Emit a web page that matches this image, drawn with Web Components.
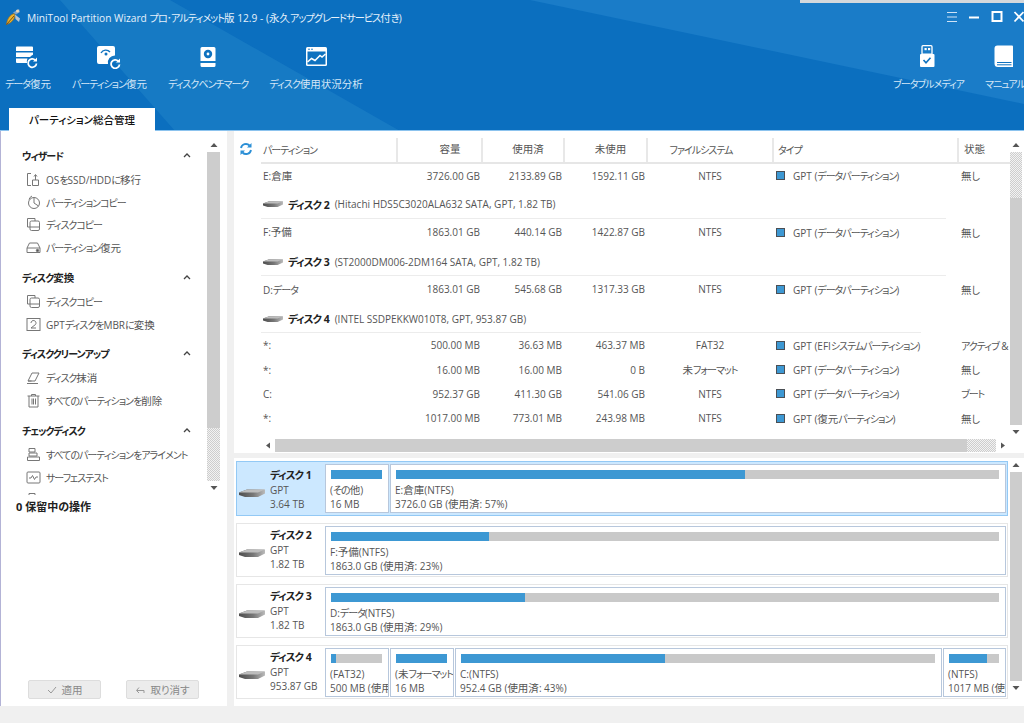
<!DOCTYPE html>
<html lang="ja">
<head>
<meta charset="utf-8">
<title>MiniTool Partition Wizard</title>
<style>
  html, body { margin: 0; height: 723px; overflow: hidden; background: #fff; }
  body {
    display: flex; flex-direction: column;
    font: 10px "Open Sans", "Noto Sans CJK JP", sans-serif;
    font-feature-settings: "palt";
    color: #555;
  }
  .main { display: flex; height: 575px; flex: none; }
  .gutter { width: 7px; flex: none; background: #f0f0f0; }
  .content { width: 790px; flex: none; display: flex; flex-direction: column; }
  .band { flex: 1; background: #f0f0f0; }
  .k { letter-spacing: -1px; }
  .h { font-size: 10.5px; line-height: 1; }
</style>
</head>
<body>
<app-header>
  <title-bar>MiniTool Partition Wizard プロ･アルティメット版 12.9 - (永久アップグレードサービス付き)</title-bar>
  <tool-bar>
    <tool-item slot="left" icon="data" label="データ復元"></tool-item>
    <tool-item slot="left" icon="part" label="パーティション復元"></tool-item>
    <tool-item slot="left" icon="bench" label="ディスクベンチマーク"></tool-item>
    <tool-item slot="left" icon="usage" label="ディスク使用状況分析"></tool-item>
    <tool-item slot="right" icon="usb" label="ブータブルメディア"></tool-item>
    <tool-item slot="right" icon="book" label="マニュアル"></tool-item>
  </tool-bar>
  <tab-strip>パーティション総合管理</tab-strip>
</app-header>

<div class="main">
  <side-panel>
    <side-group title="ウィザード">
      <side-item icon="migrate">OSをSSD/HDDに移行</side-item>
      <side-item icon="pie">パーティションコピー</side-item>
      <side-item icon="copy">ディスクコピー</side-item>
      <side-item icon="drive">パーティション復元</side-item>
    </side-group>
    <side-group title="ディスク変換">
      <side-item icon="copy">ディスクコピー</side-item>
      <side-item icon="convert">GPTディスクをMBRに変換</side-item>
    </side-group>
    <side-group title="ディスククリーンアップ">
      <side-item icon="eraser">ディスク抹消</side-item>
      <side-item icon="trash">すべてのパーティションを削除</side-item>
    </side-group>
    <side-group title="チェックディスク">
      <side-item icon="align">すべてのパーティションをアライメント</side-item>
      <side-item icon="surface">サーフェステスト</side-item>
      <side-item icon="align">ファイルシステムチェック</side-item>
    </side-group>
  </side-panel>
  <div class="gutter"></div>
  <div class="content">
    <partition-table>
      <partition-row h="25" name="E:倉庫" cap="3726.00 GB" used="2133.89 GB" free="1592.11 GB" fs="NTFS" type="GPT (データパーティション)" status="無し"></partition-row>
      <disk-row h="30" w="685" name="ディスク 2" info="(Hitachi HDS5C3020ALA632 SATA, GPT, 1.82 TB)"></disk-row>
      <partition-row h="28" name="F:予備" cap="1863.01 GB" used="440.14 GB" free="1422.87 GB" fs="NTFS" type="GPT (データパーティション)" status="無し"></partition-row>
      <disk-row h="29" w="685" name="ディスク 3" info="(ST2000DM006-2DM164 SATA, GPT, 1.82 TB)"></disk-row>
      <partition-row h="28" name="D:データ" cap="1863.01 GB" used="545.68 GB" free="1317.33 GB" fs="NTFS" type="GPT (データパーティション)" status="無し"></partition-row>
      <disk-row h="29" w="660" name="ディスク 4" info="(INTEL SSDPEKKW010T8, GPT, 953.87 GB)"></disk-row>
      <partition-row h="24.4" gap name="*:" cap="500.00 MB" used="36.63 MB" free="463.37 MB" fs="FAT32" type="GPT (EFIシステムパーティション)" status="アクティブ &amp; ブート"></partition-row>
      <partition-row h="24.4" name="*:" cap="16.00 MB" used="16.00 MB" free="0 B" fs="未フォーマット" type="GPT (データパーティション)" status="無し"></partition-row>
      <partition-row h="24.4" name="C:" cap="952.37 GB" used="411.30 GB" free="541.06 GB" fs="NTFS" type="GPT (データパーティション)" status="ブート"></partition-row>
      <partition-row h="24.4" name="*:" cap="1017.00 MB" used="773.01 MB" free="243.98 MB" fs="NTFS" type="GPT (復元パーティション)" status="無し"></partition-row>
    </partition-table>
    <disk-map>
      <disk-card selected name="ディスク 1" scheme="GPT" size="3.64 TB">
        <part-box w="64" used="100" name="(その他)" size="16 MB"></part-box>
        <part-box w="616" used="57.8" name="E:倉庫(NTFS)" size="3726.0 GB (使用済: 57%)"></part-box>
      </disk-card>
      <disk-card name="ディスク 2" scheme="GPT" size="1.82 TB">
        <part-box w="681" used="23.6" name="F:予備(NTFS)" size="1863.0 GB (使用済: 23%)"></part-box>
      </disk-card>
      <disk-card name="ディスク 3" scheme="GPT" size="1.82 TB">
        <part-box w="681" used="29.1" name="D:データ(NTFS)" size="1863.0 GB (使用済: 29%)"></part-box>
      </disk-card>
      <disk-card name="ディスク 4" scheme="GPT" size="953.87 GB">
        <part-box w="64" used="9" name="(FAT32)" size="500 MB (使用済: 7%)"></part-box>
        <part-box w="64" used="100" name="(未フォーマット)" size="16 MB"></part-box>
        <part-box w="487" used="43" name="C:(NTFS)" size="952.4 GB (使用済: 43%)"></part-box>
        <part-box w="63" used="76" name="(NTFS)" size="1017 MB (使用済: 76%)"></part-box>
      </disk-card>
    </disk-map>
  </div>
</div>
<div class="band"></div>

<script>
// the original UI font has narrow kana and slightly larger kanji, wrap runs so both fit
const fit = (text) => text
  .replace(/[\u3040-\u30FF\uFF65]+/g, m => `<span class="k">${m}</span>`)
  .replace(/[\u4E00-\u9FFF]+/g, m => `<span class="h">${m}</span>`);

const REDO = `<path d="M19.5 17.5a4.2 4.2 0 1 1-1.2-3.4" fill="none" stroke="#fff" stroke-width="1.8"/><path d="M20 11.5v4h-4z" fill="#fff"/>`;

const TOOL_ICONS = {
  data: `<path d="M1 1.500h15a1 1 0 0 1 1 1V6H0V2.500a1 1 0 0 1 1-1zM0 7.500h17v2.200a6.500 6.500 0 0 0-3 2.300H0zM0 13.500h11.500a6.500 6.500 0 0 0-.4 4.500H1a1 1 0 0 1-1-1z" fill="#fff"/><g transform="translate(1 1)">${REDO}</g>`,
  part: `<path d="M2 1h14a2 2 0 0 1 2 2v7.500a7 7 0 0 0-7 8.500H2a2 2 0 0 1-2-2V3a2 2 0 0 1 2-2z" fill="#fff"/><path d="M4 8a5.500 5.500 0 0 1 9-1" fill="none" stroke="#0f72bf" stroke-width="1.400"/><circle cx="9" cy="9" r="1.500" fill="#0f72bf"/><g transform="translate(3 2)">${REDO}</g>`,
  bench: `<path d="M2.500 1h12A1.500 1.500 0 0 1 16 2.500V15H1V2.500A1.500 1.500 0 0 1 2.500 1zM1 17h15v2.500a1.500 1.500 0 0 1-1.500 1.500h-12A1.500 1.500 0 0 1 1 19.500z" fill="#fff" transform="translate(3.500 1)"/><circle cx="12" cy="9" r="4.200" fill="#0f72bf"/><circle cx="12" cy="9" r="1.400" fill="#fff"/>`,
  usage: `<rect x="2" y="2" width="21" height="19" rx="1.500" fill="#fff"/><rect x="3.500" y="6.500" width="18" height="13" fill="#0f72bf"/><circle cx="5" cy="4.300" r=".8" fill="#0f72bf"/><circle cx="8" cy="4.300" r=".8" fill="#0f72bf"/><path d="M3.500 17l4-3.500 3.500 2 5-5 2 1.500 3.500-3" fill="none" stroke="#fff" stroke-width="1.500"/>`,
  usb: `<path d="M5.500 0h8a1 1 0 0 1 1 1v7.500h-10V1a1 1 0 0 1 1-1z" fill="none" stroke="#fff" stroke-width="1.300" transform="translate(.5 .7)"/><rect x="7.500" y="3" width="2.200" height="2.200" fill="#fff"/><rect x="11" y="3" width="2.200" height="2.200" fill="#fff"/><rect x="3" y="9" width="14.500" height="13" rx="1" fill="#fff"/><path d="M6.500 15l2.500 2.800 4.500-5" fill="none" stroke="#0f72bf" stroke-width="1.600"/>`,
  book: `<path d="M4.500 0.500H19a1 1 0 0 1 1 1V22H5a3.500 3.500 0 0 1-3.500-3.500V3.500a3 3 0 0 1 3-3z" fill="#fff"/><path d="M4 17.500h14.500M4 19.800h14.500" stroke="#0f72bf" stroke-width="1"/>`
};

const SIDE_ICONS = {
  migrate: `<path d="M5 1.500H1.500v12H5M6.500 13.500h6V8h-6zM9.500 8V3M8 4.500l1.500-2 1.500 2"/>`,
  pie: `<circle cx="8" cy="8" r="5.500"/><path d="M8 8V2.500M8 8l4.500 3M3 4.500A5.500 5.500 0 0 1 6 1"/>`,
  copy: `<path d="M4 10H1.500V1.500H9V4"/><rect x="4" y="4" width="9.500" height="9.500" rx="1.500"/><path d="M4 10h9.500"/>`,
  drive: `<path d="M3.500 3h8l2.500 5v4.500H1V8zM1 8h13"/><circle cx="11.500" cy="10.500" r="1.200" fill="#555"/>`,
  convert: `<rect x="1" y="1.500" width="13" height="12"/><path d="M5 6a2.500 2.500 0 1 1 4.500 1.500L5 11h5"/>`,
  eraser: `<path d="M6 3h7l-4 8H2zM2 11h3.500M1 13.500h11"/>`,
  trash: `<path d="M1.500 3h12M5.500 3V1.500h4V3M3 3v11h9V3M6 5.500v6M7.500 5.500v6M9.500 5.500v6"/>`,
  align: `<path d="M3 1.500h6v3.500H3zM3 6h8v3H3zM1.500 10h12v3.500h-12z"/>`,
  surface: `<rect x="1" y="2" width="13" height="11" rx="1"/><path d="M3 8h2l1.500-2.500 2 4L10 7h2"/>`
};

const diskIcon = (w) => `<svg width="${w}" height="${Math.round(w * .38)}" viewBox="0 0 26 10"><defs><linearGradient id="g" x1="0" x2="1" y1="0" y2="0"><stop offset="0" stop-color="#4d4d4d"/><stop offset=".55" stop-color="#777"/><stop offset="1" stop-color="#bbb"/></linearGradient></defs><path d="M0 4.500 8 1.500h18v4L19 9H6L0 7z" fill="url(#g)"/><path d="M0 4.500 8 1.500h18L19 4.500z" fill="#bdbdbd"/></svg>`;

class Shadowed extends HTMLElement {
  connectedCallback() {
    if (this.shadowRoot) return;
    this.attachShadow({ mode: 'open' });
    this.shadowRoot.innerHTML = `<style>.k{letter-spacing:-1px}.h{font-size:10.5px;line-height:1}${this.constructor.styles}</style>${this.template()}`;
  }
  template() { return '<slot></slot>'; }
}

class AppHeader extends Shadowed {
  static styles = `
    :host { display: block; position: relative; height: 131px; flex: none; overflow: hidden; background: #0b6fbf; box-sizing: border-box; }
    .shade { position: absolute; inset: 0; background: #1a7cc8; clip-path: polygon(530px 0, 1024px 0, 1024px 104px); }
    .streak { position: absolute; inset: 0; background: #1b7dc6; opacity: .75;
      clip-path: polygon(60px 0, 170px 0, 400px 131px, 175px 131px); }
    .edge { position: absolute; top: 0; left: 800px; right: 0; height: 3px; background: #d4d8dc; }
    .line { position: absolute; left: 0; right: 0; bottom: 0; height: 1px; background: #8cc3ee; }
    .top { position: relative; }`;
  template() {
    return `<div class="shade"></div><div class="streak"></div><div class="edge"></div><div class="line"></div><div class="top"><slot></slot></div>`;
  }
}

class TitleBar extends Shadowed {
  static styles = `
    :host { display: flex; align-items: center; height: 34px; padding-left: 5px; color: #e6f1fb; font-size: 10.2px; }
    .logo { margin-right: 4px; flex: none; }
    .text { flex: 1; white-space: nowrap; }
    .ctl { width: 16px; height: 14px; margin-left: 6.5px; flex: none; }
    .btns { display: flex; margin-right: -3px; }`;
  template() {
    this.innerHTML = fit(this.textContent);
    return `<svg class="logo" width="18" height="18" viewBox="0 0 18 18">
        <path d="M1.500 16.500C2 11 5 6.500 9.500 5.500c1.500 3.500-1.500 9-8 11z" fill="#eab52e" stroke="#9a6a1c" stroke-width=".7"/>
        <path d="M8 4.500 14 1l1 3-4 2.500z" fill="#7ea3cc"/>
        <path d="M10 6.500l5 4-1 3.500-3.500-3z" fill="#b9c6d3"/>
        <path d="M1.500 16.500 9 8" stroke="#7a4a16" stroke-width="1"/>
        <circle cx="12.500" cy="3" r="1.500" fill="#e9d9b8"/>
      </svg>
      <span class="text"><slot></slot></span>
      <div class="btns">
        <svg class="ctl" viewBox="0 0 16 14"><path d="M3 2.500h10M3 7h10M3 11.500h10" stroke="#cfe3f6" stroke-width="1"/></svg>
        <svg class="ctl" viewBox="0 0 16 14"><path d="M3 7.500h10" stroke="#fff" stroke-width="2"/></svg>
        <svg class="ctl" viewBox="0 0 16 14"><rect x="3.500" y="2" width="9" height="9" fill="none" stroke="#fff" stroke-width="2"/></svg>
        <svg class="ctl" viewBox="0 0 16 14"><path d="M3.500 2l9 9.500M12.500 2l-9 9.500" stroke="#fff" stroke-width="1.800"/></svg>
      </div>`;
  }
}

class ToolBar extends Shadowed {
  static styles = `
    :host { display: flex; justify-content: space-between; height: 74px; padding: 11px 0 0 5px; box-sizing: border-box; }
    .grp { display: flex; gap: 21px; }
    .right { margin-right: -1px; }`;
  template() {
    return `<div class="grp"><slot name="left"></slot></div><div class="grp right"><slot name="right"></slot></div>`;
  }
}

class ToolItem extends Shadowed {
  static styles = `
    :host { display: flex; flex-direction: column; align-items: center; color: #d5e7f7; font-size: 10px; white-space: nowrap; }
    svg { margin-bottom: 8px; }
    span.l { line-height: 15px; }`;
  template() {
    return `<svg width="24" height="24" viewBox="0 0 24 24">${TOOL_ICONS[this.getAttribute('icon')]}</svg><span class="l">${fit(this.getAttribute('label'))}</span>`;
  }
}

class TabStrip extends Shadowed {
  static styles = `
    :host { display: block; height: 23px; padding-left: 9px; }
    div { width: 146px; height: 23px; background: #fff; color: #111; font-size: 10.5px; font-weight: 500;
      display: flex; align-items: center; justify-content: center; }`;
  template() { return `<div><slot></slot></div>`; }
}

class ScrollBar extends Shadowed {
  static styles = `
    :host { display: flex; flex: none; background: #fff; }
    :host([dir-x]) { flex-direction: row; height: 13px; }
    :host(:not([dir-x])) { flex-direction: column; width: 13px; }
    .arrow { flex: none; width: 14px; height: 14px; display: flex; align-items: center; justify-content: center; }
    :host(:not([dir-x])) .arrow { width: 100%; }
    :host([dir-x]) .arrow { height: 100%; }
    .thumb { background: #cdcdcd; }
    .track { background: repeating-conic-gradient(#cdcdcd 0 25%, #f2f2f2 0 50%) 0 0 / 2px 2px; }
    .w { flex: none; }`;
  template() {
    // parts is a list such as "thumb:276 track:53", in draw order
    const parts = this.getAttribute('parts').split(' ').map(p => {
      const [cls, size] = p.split(':');
      const prop = this.hasAttribute('dir-x') ? 'width' : 'height';
      return `<div class="${cls} w" style="${prop}:${size}px"></div>`;
    }).join('');
    const x = this.hasAttribute('dir-x');
    const a = x ? 'M5 .5v6L1 3.500z' : 'M.5 5h7L4 1z';
    const b = x ? 'M1 .5v6l4-3z' : 'M.5 1h7L4 5z';
    const size = x ? 'width="6" height="7" viewBox="0 0 6 7"' : 'width="8" height="6" viewBox="0 0 8 6"';
    return `<div class="arrow"><svg ${size}><path d="${a}" fill="#555"/></svg></div>${parts}<div class="arrow"><svg ${size}><path d="${b}" fill="#555"/></svg></div>`;
  }
}

class SidePanel extends Shadowed {
  static styles = `
    :host { display: flex; flex-direction: column; width: 226px; flex: none; border-left: 1px solid #b3b3d6; background: #fff; }
    .upper { display: flex; height: 358px; margin-top: 7px; flex: none; }
    .list { width: 206px; height: 357px; flex: none; overflow: hidden; padding-top: 5px; box-sizing: border-box; }
    .pending { font-weight: 700; color: #222; padding-left: 15px; line-height: 22px; font-size: 11px; }
    .spring { flex: 1; }
    .btns { display: flex; gap: 25px; padding: 0 0 7px 27px; }
    .btn { width: 73px; height: 19px; box-sizing: border-box; border: 1px solid #ddd; border-radius: 2px; background: #ececec;
      color: #888; display: flex; align-items: center; justify-content: center; gap: 5px; font-size: 10.5px; }`;
  template() {
    return `<div class="upper"><div class="list"><slot></slot></div><scroll-bar parts="thumb:276 track:53"></scroll-bar></div>
      <div class="pending">0 保留中の操作</div>
      <div class="spring"></div>
      <div class="btns">
        <div class="btn"><svg width="10" height="8" viewBox="0 0 10 8"><path d="M1 4l3 3 5-6" fill="none" stroke="#999"/></svg>適用</div>
        <div class="btn"><svg width="10" height="8" viewBox="0 0 10 8"><path d="M9 7V4.500H2M4 1.500 1.500 4.500 4 7" fill="none" stroke="#999"/></svg>取り消す</div>
      </div>`;
  }
}

class SideGroup extends Shadowed {
  static styles = `
    :host { display: block; margin-bottom: 6px; }
    .hd { display: flex; align-items: center; justify-content: space-between; height: 25px; padding: 0 16px 1px 21px; box-sizing: border-box;
      font-weight: 700; color: #222; font-size: 10px; }`;
  template() {
    return `<div class="hd"><span>${fit(this.getAttribute('title'))}</span><svg width="8" height="5" viewBox="0 0 8 5"><path d="M1 4l3-3 3 3" fill="none" stroke="#444" stroke-width="1.300"/></svg></div><slot></slot>`;
  }
}

class SideItem extends Shadowed {
  static styles = `
    :host { display: flex; align-items: center; height: 22.75px; padding-left: 25px; gap: 5px; white-space: nowrap; color: #555; font-size: 10px; }
    svg { flex: none; fill: none; stroke: #777; stroke-width: 1; }`;
  template() {
    const html = fit(this.textContent);
    this.innerHTML = `<span>${html}</span>`;
    return `<svg width="15" height="15" viewBox="0 0 15 15">${SIDE_ICONS[this.getAttribute('icon')]}</svg><slot></slot>`;
  }
}

class PartitionTable extends Shadowed {
  static styles = `
    :host { display: flex; height: 322px; flex: none; background: #fff; }
    .main { width: 776px; flex: none; display: flex; flex-direction: column; padding-top: 7px; box-sizing: border-box; }
    .head { display: grid; grid-template-columns: 135px 85px 82px 83px 126px 185px 51px; margin-left: 29px; width: 747px;
      height: 25px; box-sizing: border-box; align-items: stretch; color: #555; font-size: 10px; position: relative; }
    .rule { height: 2px; background: #e6e6e6; margin: -1px 0 0 27px; flex: none; }
    .head div { display: flex; align-items: center; justify-content: center; border-right: 2px solid #e8e8e8; height: 24px; box-sizing: border-box; padding-bottom: 2px; }
    .head .l { justify-content: flex-start; }
    .refresh { position: absolute; left: -24px; top: 4px; }
    .rows { flex: 1; margin-left: 27px; overflow: hidden; }
    .x { margin: 0 0 1px 27px; }
    .v { margin-top: 7px; }`;
  template() {
    return `<div class="main">
        <div class="head">
          <svg class="refresh" width="14" height="14" viewBox="0 0 14 14"><path d="M2 6a5 5 0 0 1 8.500-2.500M12 8a5 5 0 0 1-8.500 2.500" fill="none" stroke="#2b8fd6" stroke-width="1.900"/><path d="M12.500 1v4.500H8zM1.500 13V8.500H6z" fill="#2b8fd6"/></svg>
          <div class="l">${fit('パーティション')}</div>
          <div style="padding-left:21px">${fit('容量')}</div>
          <div style="padding-left:10px">${fit('使用済')}</div>
          <div style="padding-left:10px">${fit('未使用')}</div>
          <div style="padding-right:18px">${fit('ファイルシステム')}</div>
          <div class="l" style="padding-left:4px">${fit('タイプ')}</div>
          <div class="l" style="padding-left:5px;border:0">${fit('状態')}</div>
        </div>
        <div class="rule"></div>
        <div class="rows"><slot></slot></div>
        <scroll-bar class="x" dir-x parts="thumb:692 track:29"></scroll-bar>
      </div>
      <scroll-bar class="v" style="width:12px;height:301px" parts="track:46 thumb:227"></scroll-bar>`;
  }
}

class PartitionRow extends Shadowed {
  static styles = `
    :host { display: grid; grid-template-columns: 134px 85px 82px 83px 126px 185px 52px; align-items: center; padding: 0 0 2px 2px; box-sizing: border-box;
      white-space: nowrap; color: #555; overflow: hidden; }
    .r { text-align: right; padding-right: 2px; }
    .c { text-align: center; }
    .t { display: flex; align-items: center; padding-left: 3px; }
    .sw { width: 7px; height: 7px; background: #3d98d3; border: 1px solid #4a4f55; margin-right: 8px; flex: none; }
    .s { padding-left: 3px; overflow: hidden; }`;
  template() {
    const a = (n) => this.getAttribute(n);
    this.style.height = a('h') + 'px';
    if (this.hasAttribute('gap')) this.style.marginTop = '1px';
    return `<span>${fit(a('name'))}</span><span class="r">${a('cap')}</span><span class="r">${a('used')}</span><span class="r">${a('free')}</span>
      <span class="c">${fit(a('fs'))}</span><span class="t"><i class="sw"></i><span>${fit(a('type'))}</span></span><span class="s">${fit(a('status').replace('&', '&amp;'))}</span>`;
  }
}

class DiskRow extends Shadowed {
  static styles = `
    :host { display: flex; align-items: center; box-sizing: border-box; border-bottom: 1px solid #ececec; padding: 1px 0 0 2px; white-space: nowrap; color: #555; }
    svg { margin-right: 5px; flex: none; }
    b { color: #222; margin-right: 5px; font-size: 10.5px; }`;
  template() {
    this.style.height = this.getAttribute('h') + 'px';
    this.style.width = this.getAttribute('w') + 'px';
    return `${diskIcon(20)}<b>${fit(this.getAttribute('name'))}</b><span>${this.getAttribute('info')}</span>`;
  }
}

class DiskMap extends Shadowed {
  static styles = `
    :host { display: flex; flex: 1; background: #fff; border-top: 5px solid #f0f0f0; }
    .cards { width: 772px; margin: 3px 2px 0 2px; display: flex; flex-direction: column; gap: 7px; flex: none; }
    scroll-bar { width: 12px; height: 240px; }`;
  template() {
    return `<div class="cards"><slot></slot></div><scroll-bar parts="thumb:209"></scroll-bar>`;
  }
}

class DiskCard extends Shadowed {
  static styles = `
    :host { display: flex; height: 54px; box-sizing: border-box; border: 1px solid #e6e6e6; padding: 2px 1px 2px 0; color: #555; }
    :host([selected]) { background: #cce8ff; border: 1px solid #93c9f5; height: 55px; }
    :host([selected]) .meta { padding-top: 3px; }
    .meta { width: 88px; flex: none; display: flex; align-items: center; box-sizing: border-box; padding-left: 2px; }
    .meta svg { flex: none; margin: 6px 5px 0 0; }
    .txt { line-height: 14.5px; white-space: nowrap; }
    b { color: #222; font-size: 10.5px; }
    .boxes { display: flex; gap: 1px; }`;
  template() {
    const a = (n) => this.getAttribute(n);
    return `<div class="meta">${diskIcon(26)}<div class="txt"><b>${fit(a('name'))}</b><br>${a('scheme')}<br>${a('size')}</div></div><div class="boxes"><slot></slot></div>`;
  }
}

class PartBox extends Shadowed {
  static styles = `
    :host { display: block; height: 49px; box-sizing: border-box; border: 1px solid #b7c7dc; background: #fff; overflow: hidden; white-space: nowrap; color: #555; }
    .bar { height: 9px; margin: 5px 6px 0 5px; background: #c9c9c9; }
    .fill { height: 100%; background: #3d98d3; }
    .txt { padding-left: 4px; margin-top: 4px; line-height: 14px; }`;
  template() {
    const a = (n) => this.getAttribute(n);
    this.style.width = a('w') + 'px';
    return `<div class="bar"><div class="fill" style="width:${a('used')}%"></div></div><div class="txt">${fit(a('name'))}<br>${fit(a('size'))}</div>`;
  }
}

customElements.define('scroll-bar', ScrollBar);
customElements.define('part-box', PartBox);
customElements.define('disk-card', DiskCard);
customElements.define('disk-map', DiskMap);
customElements.define('disk-row', DiskRow);
customElements.define('partition-row', PartitionRow);
customElements.define('partition-table', PartitionTable);
customElements.define('side-item', SideItem);
customElements.define('side-group', SideGroup);
customElements.define('side-panel', SidePanel);
customElements.define('tab-strip', TabStrip);
customElements.define('tool-item', ToolItem);
customElements.define('tool-bar', ToolBar);
customElements.define('title-bar', TitleBar);
customElements.define('app-header', AppHeader);
</script>
</body>
</html>
